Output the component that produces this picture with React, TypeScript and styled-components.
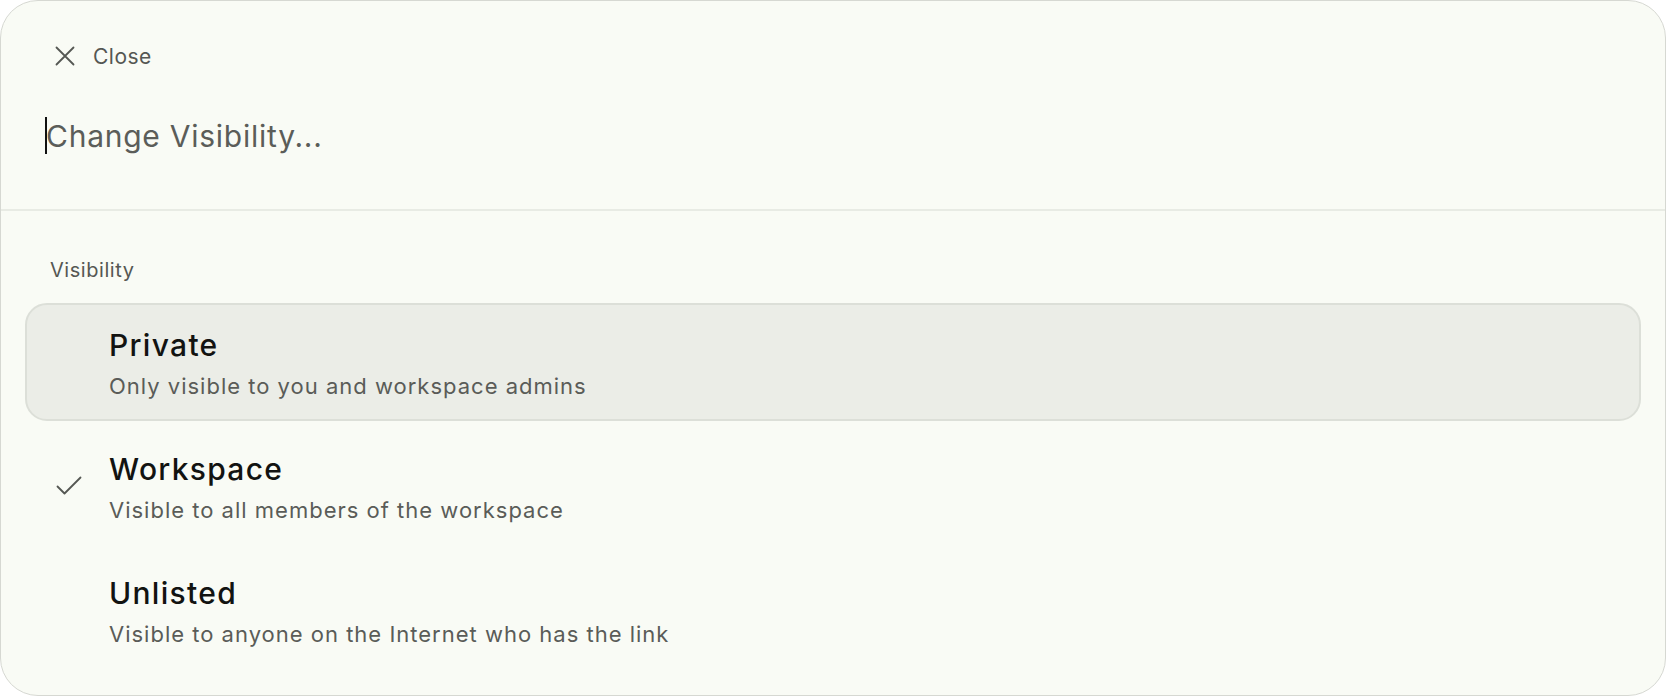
import React from "react";
import styled, { createGlobalStyle } from "styled-components";

const GlobalStyle = createGlobalStyle`
  html, body {
    margin: 0;
    padding: 0;
    background: #ffffff;
  }
  body {
    font-family: Inter, "Noto Sans", "Liberation Sans", sans-serif;
    -webkit-font-smoothing: antialiased;
  }
  * { box-sizing: border-box; }
`;

const Panel = styled.div`
  width: 1666px;
  height: 696px;
  background: #f9fbf5;
  border: 1px solid #d6d8d2;
  border-radius: 38px;
  overflow: hidden;
  display: flex;
  flex-direction: column;
`;

const Header = styled.div`
  padding: 38px 44px 0 44px;
  height: 210px;
  border-bottom: 2px solid #e8ebe4;
  display: flex;
  flex-direction: column;
`;

const CloseButton = styled.button`
  display: flex;
  align-items: center;
  gap: 18px;
  height: 34px;
  margin-left: 10px;
  padding: 0;
  border: none;
  background: transparent;
  color: #555753;
  font-family: inherit;
  font-size: 21px;
  letter-spacing: 0.5px;
  cursor: pointer;
  align-self: flex-start;
`;

const SearchRow = styled.div`
  margin-top: 44px;
  height: 37px;
  display: flex;
  align-items: center;
`;

const Caret = styled.span`
  width: 2px;
  height: 37px;
  background: #111;
`;

const Placeholder = styled.span`
  margin-left: -1px;
  font-size: 30px;
  color: #5b5d59;
  letter-spacing: 0.75px;
`;

const Body = styled.div`
  padding: 47px 24px 0 24px;
  display: flex;
  flex-direction: column;
`;

const SectionLabel = styled.div`
  height: 24px;
  line-height: 24px;
  padding-left: 25px;
  font-size: 20px;
  letter-spacing: 0.55px;
  color: #555753;
  margin-bottom: 21px;
`;

const OptionList = styled.div`
  display: flex;
  flex-direction: column;
  gap: 6px;
`;

const Option = styled.div<{ $active?: boolean }>`
  height: 118px;
  padding-top: 4px;
  display: grid;
  grid-template-columns: 82px 1fr;
  align-items: center;
  border-radius: 22px;
  border: 2px solid ${(p) => (p.$active ? "#dcdfd8" : "transparent")};
  background: ${(p) => (p.$active ? "#ebede7" : "transparent")};
`;

const CheckSlot = styled.div`
  display: flex;
  align-items: center;
  padding-left: 29px;
  margin-top: -4px;
  color: #555753;
`;

const OptionText = styled.div`
  display: flex;
  flex-direction: column;
  gap: 10px;
`;

const OptionTitle = styled.div`
  font-size: 30px;
  line-height: 34px;
  letter-spacing: 1.3px;
  color: #121311;
  font-weight: 500;
`;

const OptionDesc = styled.div`
  font-size: 22px;
  line-height: 28px;
  letter-spacing: 1px;
  color: #5a5c58;
`;

const CloseIcon = () => (
  <svg width="20" height="20" viewBox="0 0 20 20" fill="none">
    <path d="M1.5 1.5 L18.5 18.5 M18.5 1.5 L1.5 18.5" stroke="#555753" strokeWidth="1.8" strokeLinecap="round" />
  </svg>
);

const CheckIcon = () => (
  <svg width="26" height="20" viewBox="0 0 26 20" fill="none">
    <path d="M1.5 10.5 L8.5 17.5 L24.5 1.5" stroke="#555753" strokeWidth="1.8" strokeLinecap="round" strokeLinejoin="round" />
  </svg>
);

const options = [
  { title: "Private", desc: "Only visible to you and workspace admins", active: true, checked: false },
  { title: "Workspace", desc: "Visible to all members of the workspace", active: false, checked: true },
  { title: "Unlisted", desc: "Visible to anyone on the Internet who has the link", active: false, checked: false },
];

export default function App() {
  return (
    <>
      <GlobalStyle />
      <Panel>
        <Header>
          <CloseButton>
            <CloseIcon />
            <span>Close</span>
          </CloseButton>
          <SearchRow>
            <Caret />
            <Placeholder>Change Visibility...</Placeholder>
          </SearchRow>
        </Header>
        <Body>
          <SectionLabel>Visibility</SectionLabel>
          <OptionList>
            {options.map((o) => (
              <Option key={o.title} $active={o.active}>
                <CheckSlot>{o.checked ? <CheckIcon /> : null}</CheckSlot>
                <OptionText>
                  <OptionTitle>{o.title}</OptionTitle>
                  <OptionDesc>{o.desc}</OptionDesc>
                </OptionText>
              </Option>
            ))}
          </OptionList>
        </Body>
      </Panel>
    </>
  );
}
